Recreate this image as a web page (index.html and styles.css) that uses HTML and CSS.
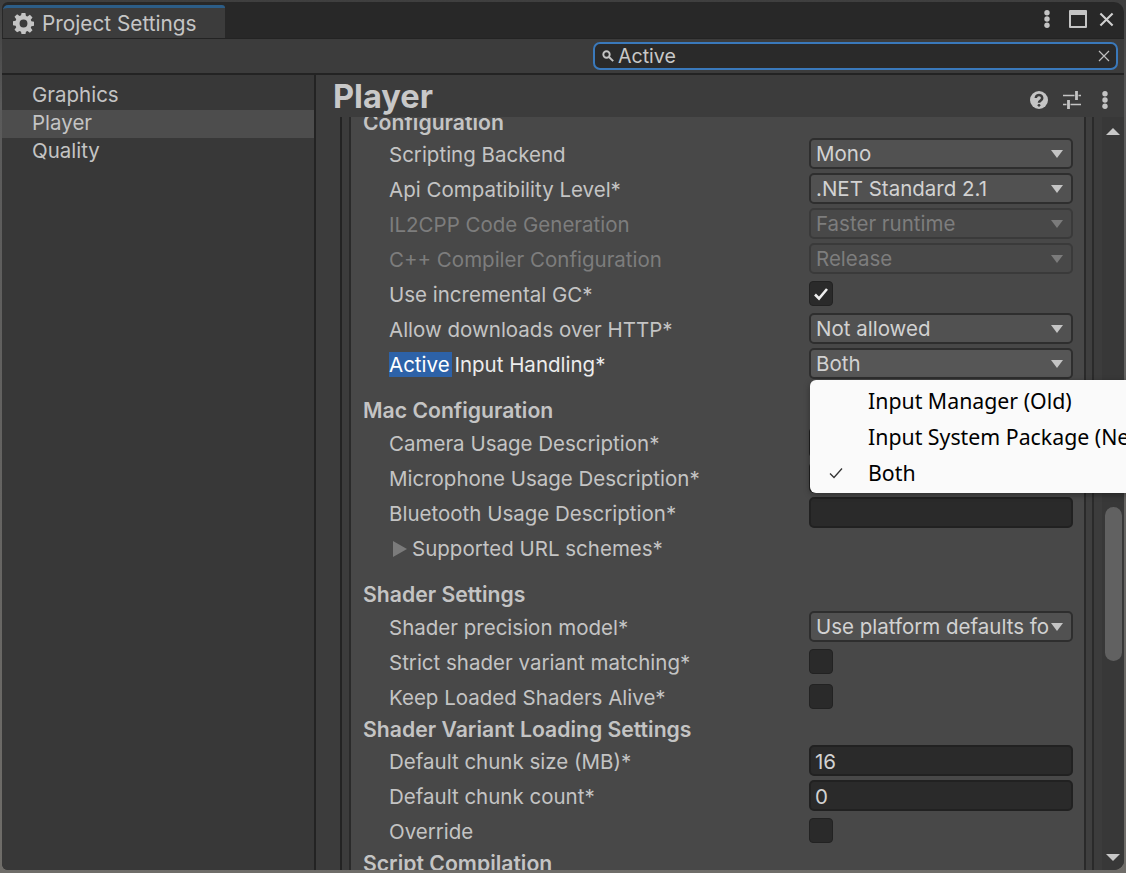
FILE: index.html
```html
<!DOCTYPE html>
<html lang="en">
<head>
<meta charset="utf-8">
<title>Project Settings</title>
<link rel="stylesheet" href="styles.css">
</head>
<body>
<div class="window">
  <div class="tabbar">
    <div class="tab">
      <svg class="gear" viewBox="0 0 24 24"><path fill-rule="evenodd" d="M9.800 0h4.400l.6 3.300 1.700.7L19.300 2l3 3-2 2.800.7 1.700 3 .6v4.400l-3 .6-.7 1.700 2 2.800-3 3-2.800-2-1.700.7-.6 3.300H9.800l-.6-3.300-1.700-.7L4.700 22l-3-3 2-2.800-.7-1.700-3-.6V9.500l3-.6.7-1.700-2-2.800 3-3 2.800 2 1.700-.7zM12 7.500a4.500 4.500 0 1 0 0 9 4.500 4.500 0 0 0 0-9z"/></svg>
      <span>Project Settings</span>
    </div>
    <div class="winbtns">
      <svg class="kebab gap" viewBox="0 0 6 18"><circle cx="3" cy="2.700" r="2.700"/><circle cx="3" cy="9" r="2.700"/><circle cx="3" cy="15.300" r="2.700"/></svg>
      <svg class="maxi" viewBox="0 0 18 18"><path fill-rule="evenodd" d="M1 0h16a1 1 0 0 1 1 1v16a1 1 0 0 1-1 1H1a1 1 0 0 1-1-1V1a1 1 0 0 1 1-1zM2 5v11h14V5z"/></svg>
      <svg class="closex" viewBox="0 0 16 16"><path d="M1.500 1.500l13 13M14.500 1.500l-13 13"/></svg>
    </div>
  </div>
  <div class="toolbar">
    <div class="search">
      <svg class="mag" viewBox="0 0 12 12"><circle cx="4.500" cy="4.500" r="3.200"/><path d="M7 7l4.200 4.200"/></svg>
      <span class="search-text">Active</span>
      <svg class="clear" viewBox="0 0 12 12"><path d="M1 1l10 10M11 1L1 11"/></svg>
    </div>
  </div>
  <div class="main">
    <nav class="sidebar">
      <div class="nav-item">Graphics</div>
      <div class="nav-item selected">Player</div>
      <div class="nav-item">Quality</div>
    </nav>
    <section class="pane">
      <header class="pane-head">
        <h1>Player</h1>
        <div class="head-icons">
          <svg class="help" viewBox="0 0 18 18"><circle cx="9" cy="9" r="9"/><path class="q" d="M5.800 7a3.200 3 0 1 1 4.800 2.600c-1 .6-1.600 1-1.600 2.200"/><circle class="qdot" cx="9" cy="14.300" r="1.400"/></svg>
          <svg class="sliders" viewBox="0 0 18 18"><path d="M0 4.500h11.500M15.500 4.500h2.500M0 13.500h3.500M7.500 13.500h10.500"/><path class="knob" d="M13.500 0v9M5.500 9v9"/></svg>
          <svg class="kebab small" viewBox="0 0 6 18"><circle cx="3" cy="2.700" r="2.700"/><circle cx="3" cy="9" r="2.700"/><circle cx="3" cy="15.300" r="2.700"/></svg>
        </div>
      </header>
      <div class="body">
        <div class="gutter"></div>
        <div class="content">
          <div class="rows">
            <h2 class="heading first">Configuration</h2>
            <div class="row"><label>Scripting Backend</label><div class="dd">Mono<i></i></div></div>
            <div class="row"><label>Api Compatibility Level*</label><div class="dd">.NET Standard 2.1<i></i></div></div>
            <div class="row off"><label>IL2CPP Code Generation</label><div class="dd">Faster runtime<i></i></div></div>
            <div class="row off"><label>C++ Compiler Configuration</label><div class="dd">Release<i></i></div></div>
            <div class="row"><label>Use incremental GC*</label><div class="cb">
              <svg viewBox="0 0 16 14"><path d="M2 7.500l4 4 8-9.500"/></svg></div></div>
            <div class="row"><label>Allow downloads over HTTP*</label><div class="dd">Not allowed<i></i></div></div>
            <div class="row match"><label><mark>Active</mark> Input Handling*</label><div class="dd lit">Both<i></i></div></div>
            <h2 class="heading spaced">Mac Configuration</h2>
            <div class="row"><label>Camera Usage Description*</label><div class="tf"></div></div>
            <div class="row"><label>Microphone Usage Description*</label><div class="tf"></div></div>
            <div class="row"><label>Bluetooth Usage Description*</label><div class="tf"></div></div>
            <div class="row"><label class="fold"><b class="tri"></b>Supported URL schemes*</label></div>
            <h2 class="heading spaced2">Shader Settings</h2>
            <div class="row"><label>Shader precision model*</label><div class="dd">Use platform defaults fo<i></i></div></div>
            <div class="row"><label>Strict shader variant matching*</label><div class="cb"></div></div>
            <div class="row"><label>Keep Loaded Shaders Alive*</label><div class="cb"></div></div>
            <h2 class="heading tight">Shader Variant Loading Settings</h2>
            <div class="row"><label>Default chunk size (MB)*</label><div class="tf">16</div></div>
            <div class="row"><label>Default chunk count*</label><div class="tf">0</div></div>
            <div class="row"><label>Override</label><div class="cb"></div></div>
            <h2 class="heading last">Script Compilation</h2>
          </div>
          <div class="strip narrow"></div>
          <div class="strip wide"></div>
          <div class="scrollbar">
            <b class="arrow up"></b>
            <div class="thumb"></div>
            <b class="arrow down"></b>
          </div>
        </div>
      </div>
    </section>
  </div>
  <div class="popup">
    <div class="pop-item">Input Manager (Old)</div>
    <div class="pop-item">Input System Package (New)</div>
    <div class="pop-item"><svg class="tick" viewBox="0 0 14 12"><path d="M1 6.500l4 4L13 1.500"/></svg>Both</div>
  </div>
</div>
</body>
</html>
```
FILE: styles.css
```css
* { box-sizing: border-box; }
html, body { margin: 0; height: 100%; overflow: hidden; background: #6f6d69; }
body { font-family: Inter, "Liberation Sans", sans-serif; font-size: 20.500px; color: #c4c4c4; }
.window { position: relative; width: 1126px; height: 873px; padding: 2px 2px 3px 2px; background: linear-gradient(#3f3f3f, #5a5a5a 12%, #6f6d69); }

.tabbar { height: 36px; display: flex; justify-content: space-between; background: #282828; border-radius: 6px 10px 0 0; }
.tab { width: 222px; height: 33px; margin: 3px 0 0 1px; padding: 0 0 0 10px; display: flex; align-items: center; gap: 8px; background: #3c3c3c; border-top: 3px solid #2c5d87; border-radius: 5px 3px 0 0; color: #c6c6c6; font-size: 20.800px; }
.gear { width: 21px; height: 21px; fill: #c4c4c4; }
.winbtns { display: flex; align-items: center; gap: 12px; padding: 0 10px 0 0; margin-top: -2px; }
.kebab { width: 6px; height: 18px; fill: #c4c4c4; }
.kebab.gap { margin-right: 7px; }
.maxi { width: 18px; height: 18px; fill: #c4c4c4; }
.closex { width: 15px; height: 15px; fill: none; stroke: #d0d0d0; stroke-width: 2.200; }

.toolbar { height: 37px; padding: 3px 6px 0 0; display: flex; justify-content: flex-end; background: #3c3c3c; border-top: 1px solid #232323; border-bottom: 2px solid #232323; }
.search { width: 525px; height: 28px; padding: 0 6px 0 7px; display: flex; align-items: center; background: #2a2a2a; border: 2px solid #3a79bb; border-radius: 7px; color: #c8c8c8; font-size: 19.600px; }
.mag { width: 12px; height: 12px; flex: none; fill: none; stroke: #c4c4c4; stroke-width: 1.900; }
.search-text { flex: 1; padding-left: 4px; }
.clear { width: 12px; height: 12px; flex: none; fill: none; stroke: #c0c0c0; stroke-width: 1.200; }

.main { display: flex; height: 795px; background: #383838; border-radius: 0 0 10px 6px; overflow: hidden; }
.sidebar { width: 314px; flex: none; padding-top: 7px; background: #383838; border-right: 2px solid #232323; }
.nav-item { height: 28px; line-height: 26px; padding-left: 30px; color: #c4c4c4; }
.selected { background: #4d4d4d; }

.pane { flex: 1; min-width: 0; display: flex; flex-direction: column; background: #3c3c3c; }
.pane-head { height: 42px; flex: none; padding: 0 16px 0 17px; display: flex; justify-content: space-between; align-items: center; }
h1 { margin: 0; font-size: 32.600px; font-weight: 700; color: #c8c8c8; line-height: 42px; }
.head-icons { display: flex; align-items: center; gap: 15px; padding-top: 7px; }
.help { width: 18px; height: 18px; fill: #c4c4c4; }
.help .q { fill: none; stroke: #3c3c3c; stroke-width: 2.600; }
.help .qdot { fill: #3c3c3c; }
.sliders { width: 18px; height: 18px; fill: none; stroke: #c4c4c4; stroke-width: 1.600; }
.sliders .knob { stroke-width: 2.800; }
.kebab.small { margin-left: 6px; }

.body { flex: 1; min-height: 0; display: flex; }
.gutter { width: 26px; flex: none; border-right: 2px solid #232323; }
.content { flex: 1; min-width: 0; margin-left: 7px; display: flex; border-left: 2px solid #2a2a2a; overflow: hidden; }
.rows { width: 735px; flex: none; padding: 0 11px 0 12px; background: #484848; border-right: 2px solid #2a2a2a; overflow: hidden; }
.strip { flex: none; }
.narrow { width: 8px; background: #3f3f3f; border-right: 2px solid #2a2a2a; }
.wide { width: 8px; background: #3c3c3c; }

.heading { margin: 0; font-size: 21.200px; font-weight: 600; color: #c4c4c4; display: flex; align-items: center; white-space: nowrap; }
.heading.first { height: 29px; margin-top: -10px; }
.spaced { height: 33px; margin-top: 11px; padding-top: 2px; }
.spaced2 { height: 33px; margin-top: 11px; padding-top: 2px; }
.tight { height: 29px; }
.last { height: 30px; }

.row { height: 35px; display: flex; align-items: center; justify-content: space-between; padding-left: 26px; }
.row label { flex: none; white-space: nowrap; padding-top: 2px; }
.row.off { color: #7d7d7d; }
.match label { color: #ececec; }
mark { background: #2d62a8; color: #fff; padding-right: 2px; margin-right: -3px; }
.row .fold { display: flex; align-items: center; padding-left: 4px; }
.tri { width: 0; height: 0; margin-right: 5px; border-left: 14px solid #7b7b7b; border-top: 8px solid transparent; border-bottom: 8px solid transparent; }

.dd, .tf { width: 264px; height: 31px; flex: none; border-radius: 5px; display: flex; align-items: center; white-space: nowrap; }
.dd { position: relative; padding: 0 5px; background: #515151; border: 2px solid #2e2e2e; color: #d2d2d2; }
.dd.lit { background: #565656; }
.dd i { position: absolute; right: 8px; top: 10px; border-top: 8px solid #c4c4c4; border-left: 6.500px solid transparent; border-right: 6.500px solid transparent; }
.off .dd { background: #484848; border-color: #3a3a3a; color: #7d7d7d; }
.off .dd i { border-top-color: #7b7b7b; }
.tf { background: #2a2a2a; border: 2px solid #212121; color: #d2d2d2; padding: 2px 4px 0; }
.row:has(.cb) { padding-right: 240px; }
.cb { width: 24px; height: 25px; flex: none; background: #2a2a2a; border: 1px solid #222; border-radius: 4px; display: flex; align-items: center; justify-content: center; }
.cb svg { width: 16px; height: 14px; fill: none; stroke: #eee; stroke-width: 2.600; }

.scrollbar { flex: 1; min-width: 0; display: flex; flex-direction: column; align-items: center; background: #383838; }
.arrow { flex: none; border-left: 7px solid transparent; border-right: 7px solid transparent; }
.up { margin: 11px 0 10px; border-bottom: 7px solid #c8c8c8; }
.down { margin: auto 0 9px; border-top: 7px solid #c8c8c8; }
.thumb { width: 17px; height: 154px; margin-top: 362px; background: #616161; border-radius: 9px; }

.popup { position: absolute; left: 810px; top: 380px; width: 340px; height: 113px; padding: 3px 0 0; background: #fafafa; border-radius: 6px 0 0 6px; box-shadow: 0 2px 6px rgba(0,0,0,.35); }
.pop-item { position: relative; height: 36px; line-height: 36px; padding-left: 58px; font-family: "Noto Sans", sans-serif; font-size: 21.300px; color: #000; white-space: nowrap; }
.tick { position: absolute; left: 19px; top: 12px; width: 14px; height: 12px; fill: none; stroke: #333; stroke-width: 1.300; }
```
